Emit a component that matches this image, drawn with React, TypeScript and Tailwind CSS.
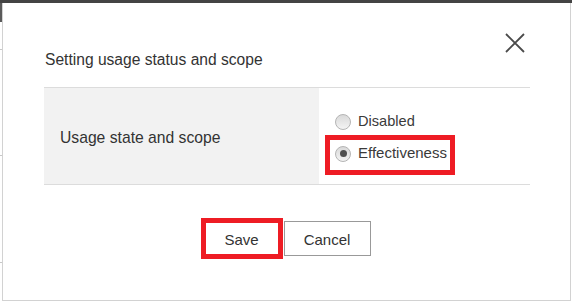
import React from "react";

function Radio({ checked }: { checked?: boolean }) {
  return (
    <span className="w-[16px] h-[16px] rounded-full border border-[#b4b4b4] bg-gradient-to-b from-[#d9d9d9] to-[#f4f4f4] flex items-center justify-center shrink-0">
      {checked && <span className="w-[7px] h-[7px] rounded-full bg-[#505050]" />}
    </span>
  );
}

export default function App() {
  return (
    <div className="w-[572px] h-[301px] bg-white overflow-hidden text-[#333] font-['Liberation_Sans',Arial,sans-serif]">
      <div className="h-[3px] bg-[#444]" />
      <div className="flex h-[298px]">
        <div className="w-[2px] flex flex-col">
          <div className="h-[19px] bg-[#5a5a5a]" />
          <div className="h-[27px]" />
          <div className="h-[1px] bg-[#c8c8c8]" />
          <div className="h-[105px]" />
          <div className="h-[1px] bg-[#c8c8c8]" />
          <div className="h-[106px]" />
          <div className="h-[1px] bg-[#c8c8c8]" />
        </div>
        <div className="flex-1 mr-[1px] border-l border-r border-b border-[#d2d2d2] relative">
          <div className="h-[84px] pt-[47px] pl-[42px]">
            <div className="text-[15.6px] leading-[20px]">Setting usage status and scope</div>
          </div>
          <button className="absolute right-[45px] top-[30px] w-[20px] h-[20px]" aria-label="close">
            <svg width="20" height="20" viewBox="0 0 20 20">
              <path d="M1 1 L19 19 M19 1 L1 19" stroke="#4a4a4a" strokeWidth="1.8" fill="none" />
            </svg>
          </button>
          <div className="ml-[41px] w-[486px] flex border-t border-b border-[#dcdcdc] h-[98px]">
            <div className="w-[275px] bg-[#f2f2f2] flex items-center pl-[16px] pt-[4px] text-[15.7px]">
              Usage state and scope
            </div>
            <div className="flex-1 flex flex-col pt-[20px] pl-[11px] gap-[2px] text-[15px] text-[#3a3a3a]">
              <label className="self-start flex items-center h-[30px] pb-[3px] pl-[5px] gap-[7px]">
                <Radio />
                <span className="text-[14.6px]">Disabled</span>
              </label>
              <label className="self-start flex items-center h-[30px] pb-[3px] pl-[5px] pr-[3px] gap-[7px] outline-[5px] outline-solid outline-[#ee1c24]">
                <Radio checked />
                <span>Effectiveness</span>
              </label>
            </div>
          </div>
          <div className="mt-[36px] h-[35px] flex items-center justify-center gap-[6px] pl-[3px] text-[15px] text-[#333]">
            <button className="w-[72px] h-[31px] pt-[3px] bg-white outline-[5px] outline-solid outline-[#ee1c24]">Save</button>
            <button className="w-[87px] h-[35px] pt-[3px] bg-white border border-[#999]">Cancel</button>
          </div>
        </div>
      </div>
    </div>
  );
}
